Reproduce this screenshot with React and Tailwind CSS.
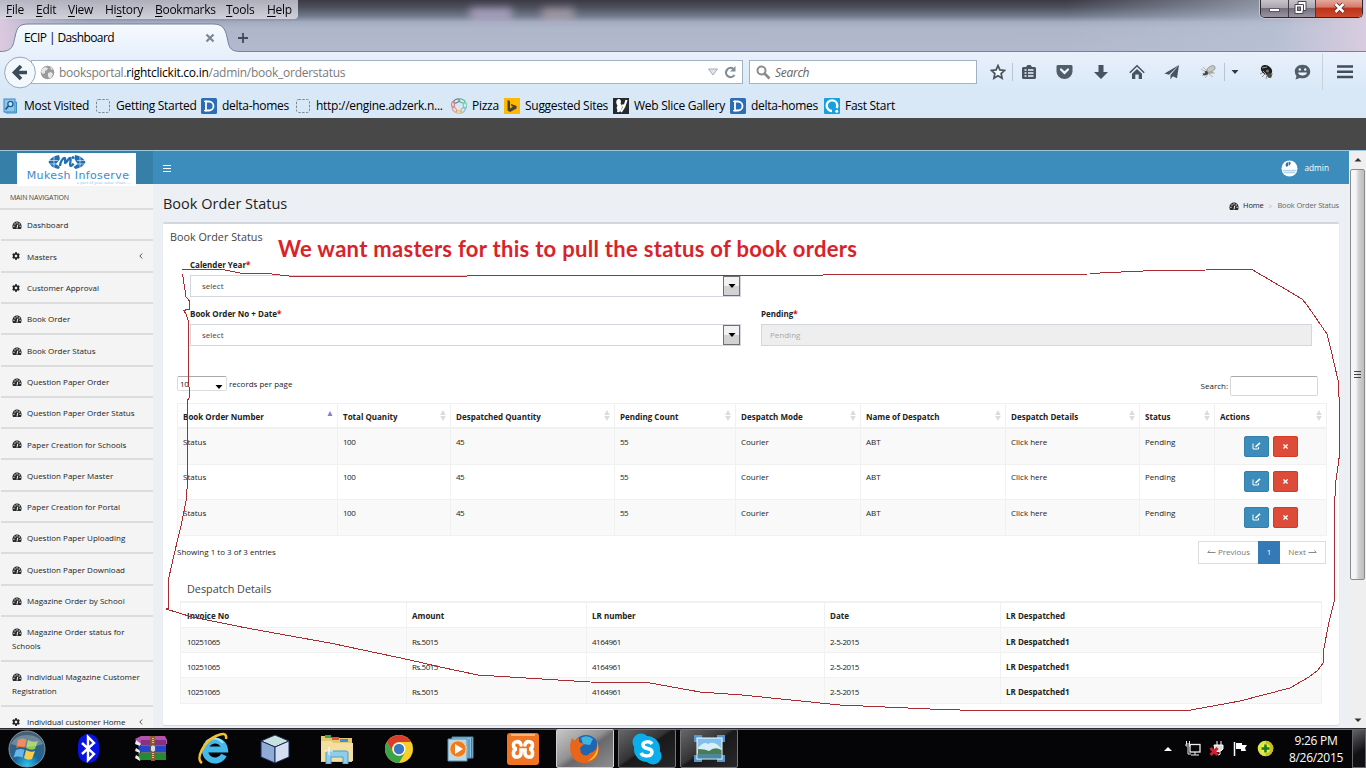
import React from "react";
import { FaCog, FaTimes } from "react-icons/fa";

const MENUS = [
  ["", "F", "ile", "w-[30px]"],
  ["", "E", "dit", "w-[32px]"],
  ["", "V", "iew", "w-[37px]"],
  ["Hi", "s", "tory", "w-[50px]"],
  ["", "B", "ookmarks", "w-[71px]"],
  ["", "T", "ools", "w-[41px]"],
  ["", "H", "elp", "w-[30px]"],
];

function DIcon() {
  return (
    <svg width="16" height="16" viewBox="0 0 16 16">
      <rect width="16" height="16" rx="1.5" fill="#2c6db5" />
      <path d="M5 3.5h3a4.3 4.3 0 0 1 0 9H5z" fill="none" stroke="#fff" strokeWidth="1.8" />
      <path d="M3 3.3h3M3 12.7h3" stroke="#fff" strokeWidth="1.2" />
    </svg>
  );
}
function BlankIcon() {
  return (
    <svg width="15" height="16" viewBox="0 0 15 16">
      <rect x="0.5" y="1.5" width="13" height="13" rx="2" fill="none" stroke="#7d8790" strokeDasharray="2.4 1.4" />
    </svg>
  );
}
function VisitedIcon() {
  return (
    <svg width="16" height="16" viewBox="0 0 16 16">
      <path d="M3 4h10.500v11H3z" fill="#a9d4f0" stroke="#3d8fc4" />
      <rect x="1" y="1" width="11" height="13" fill="#8cc6ea" stroke="#3a8cc2" />
      <circle cx="7.400" cy="6" r="2.600" fill="#c4e4f8" stroke="#1c5a90" strokeWidth="1.300" />
      <path d="M5.400 8L2.500 11.500" stroke="#1c5a90" strokeWidth="1.800" />
    </svg>
  );
}
function PizzaIcon() {
  return (
    <svg width="16" height="16" viewBox="0 0 16 16" fill="none" strokeWidth="1.2">
      <ellipse cx="5.5" cy="3" rx="3.2" ry="1.7" transform="rotate(-25 5.5 3)" stroke="#6e7f8c" />
      <ellipse cx="11" cy="3" rx="3.2" ry="1.7" transform="rotate(25 11 3)" stroke="#57b894" />
      <ellipse cx="14" cy="7.5" rx="1.7" ry="3" stroke="#7ecdb0" />
      <ellipse cx="12" cy="12" rx="3" ry="1.7" transform="rotate(-55 12 12)" stroke="#8cb9d8" />
      <ellipse cx="8" cy="14" rx="3" ry="1.4" stroke="#f0bd5c" />
      <ellipse cx="3.5" cy="11.5" rx="3" ry="1.6" transform="rotate(55 3.5 11.5)" stroke="#e79a88" />
      <ellipse cx="2" cy="6.5" rx="1.4" ry="2.8" stroke="#df8080" />
    </svg>
  );
}
function BingIcon() {
  return (
    <svg width="16" height="16" viewBox="0 0 16 16">
      <rect width="16" height="16" fill="#ffb900" />
      <path d="M3.500 2l2.500 1v7.500l3-1.700-1.500-.8-.9-2.300 6 2.200v2.700L6 14l-2.500-1.500z" fill="#4a4335" />
    </svg>
  );
}
function SliceIcon() {
  return (
    <svg width="16" height="16" viewBox="0 0 16 16">
      <rect width="16" height="16" fill="#26292d" />
      <path d="M5.500 1c2.500 0 3 2.500 2 4.500C9 7 9.500 9 8.500 11c-.5 2.500-2.500 3.500-4.500 3 .5-1.500.5-2.500-.5-4L4.500 7.500C2.500 5 3 1.500 5.500 1z" fill="#fff" />
      <path d="M9.500 6.500l1.300 3M13.500 2c-1 5-2.500 8-5.500 12" stroke="#fff" strokeWidth="2" fill="none" />
    </svg>
  );
}
function FastIcon() {
  return (
    <svg width="16" height="16" viewBox="0 0 16 16">
      <rect width="16" height="16" rx="1" fill="#16a0df" />
      <path d="M8 13a5.300 5.300 0 1 1 5.300-5.300c0 1-.3 1.800-.7 2.500" fill="none" stroke="#fff" strokeWidth="2.400" />
      <circle cx="12.800" cy="13.300" r="1.500" fill="#fff" />
    </svg>
  );
}

const BOOKMARKS = [
  [VisitedIcon, "Most Visited", "w-[93px]"],
  [BlankIcon, "Getting Started", "w-[105px]"],
  [DIcon, "delta-homes", "w-[95px]"],
  [BlankIcon, "http://engine.adzerk.n...", "w-[155px]"],
  [PizzaIcon, "Pizza", "w-[53px]"],
  [BingIcon, "Suggested Sites", "w-[109px]"],
  [SliceIcon, "Web Slice Gallery", "w-[117px]"],
  [DIcon, "delta-homes", "w-[94px]"],
  [FastIcon, "Fast Start", "w-[90px]"],
];

const NAV = [
  ["Dashboard", "dash", "h-[31px]"],
  ["Masters", "cog", "h-[31.8px]", true],
  ["Customer Approval", "cog", "h-[31.3px]"],
  ["Book Order", "dash", "h-[31.3px]"],
  ["Book Order Status", "dash", "h-[31.3px]"],
  ["Question Paper Order", "dash", "h-[31.3px]"],
  ["Question Paper Order Status", "dash", "h-[31.3px]"],
  ["Paper Creation for Schools", "dash", "h-[31.3px]"],
  ["Question Paper Master", "dash", "h-[31.3px]"],
  ["Paper Creation for Portal", "dash", "h-[31.3px]"],
  ["Question Paper Uploading", "dash", "h-[31.3px]"],
  ["Question Paper Download", "dash", "h-[31.3px]"],
  ["Magazine Order by School", "dash", "h-[31.3px]"],
  ["Magazine Order status for Schools", "dash", "h-[44.8px]"],
  ["Individual Magazine Customer Registration", "dash", "h-[44.8px]"],
  ["Individual customer Home", "cog", "h-[31.3px]", true],
];

const COLS = [
  ["Book Order Number", "Status", "w-[160px]"],
  ["Total Quanity", "100", "w-[113px]"],
  ["Despatched Quantity", "45", "w-[164px]"],
  ["Pending Count", "55", "w-[121px]"],
  ["Despatch Mode", "Courier", "w-[125px]"],
  ["Name of Despatch", "ABT", "w-[145px]"],
  ["Despatch Details", "Click here", "w-[134px]"],
  ["Status", "Pending", "w-[75px]"],
];

const LR = [
  ["Invoice No", "10251065", "w-[226px] pl-[6px]"],
  ["Amount", "Rs.5015", "w-[180px] pl-[5px]"],
  ["LR number", "4164961", "w-[238px] pl-[5px]"],
  ["Date", "2-5-2015", "w-[176px] pl-[5px]"],
];

function Gauge({ className }) {
  return (
    <svg width="10" height="8" viewBox="0 0 10 8" className={className}>
      <path d="M1 8C-.5 5 1 .5 5 .5S10.500 5 9 8z" fill="#2b2b2b" />
      <path d="M3 2.300v1.400M5 1.200v1.400M7.200 2.300v1.400M1.300 5.300h1.300M7.500 5.300h1.300M5 7.500L5.700 3.800" stroke="#f4f4f4" strokeWidth="1" />
    </svg>
  );
}

function Browser() {
  return (
    <header className="h-[118px] shrink-0 text-[12px] leading-none tracking-[-0.28px] text-black">
      <div className="relative h-[51px] bg-[linear-gradient(180deg,#3b3a45_0px,#4c4f5b_7px,#71798a_16px,#a2abbf_22px,#aeb6ca_28px,#b3b9ce_51px)]">
        <div className="absolute inset-y-0 left-0 w-[90px] bg-[linear-gradient(90deg,#dcc9df_0px,#c9c3d9aa_30px,transparent)]" />
        <div className="absolute inset-y-0 right-0 w-[300px] bg-[linear-gradient(90deg,transparent,#bac4d6aa_70%,#d9cce0_100%)]" />
        <div className="absolute top-[8px] left-[470px] h-3 w-[42px] bg-[#c3b4d8] opacity-70 blur-[4px]" />
        <div className="absolute top-[8px] left-[542px] h-3 w-8 bg-[#c6b3bf] opacity-60 blur-[4px]" />
        <div className="relative flex h-[19px] w-[298px] items-center rounded-br bg-[linear-gradient(180deg,#b6b6c2,#d5d5e0)] pl-[6px] opacity-95">
          {MENUS.map(([a, u, b, w]) => (
            <span key={u + b} className={"shrink-0 whitespace-nowrap " + w}>
              {a}<u className="underline-offset-2">{u}</u>{b}
            </span>
          ))}
        </div>
        <svg className="absolute top-[23px] left-0" width="1366" height="29" fill="none">
          <defs>
            <linearGradient id="tab" x1="0" y1="0" x2="0" y2="1">
              <stop offset="0" stopColor="#f6fafe" />
              <stop offset="1" stopColor="#e7f0fa" />
            </linearGradient>
          </defs>
          <path d="M0 28.500C13 28.500 13 22 15 14C17 4 19 1 29 1H213C222 1 225 5 227 14C229 23 229 28.500 240 28.500V30H0z" fill="url(#tab)" />
          <path d="M0 28.500C13 28.500 13 22 15 14C17 4 19 1 29 1H213C222 1 225 5 227 14C229 23 229 28.500 240 28.500H1366" stroke="#76809a" />
          <path d="M206.500 11.500l7 7M213.500 11.500l-7 7" stroke="#7c8794" strokeWidth="2.200" />
          <path d="M238 15h10M243 10v10" stroke="#414b59" strokeWidth="1.800" />
        </svg>
        <span className="absolute top-[32px] left-6 tracking-[-0.600px]">ECIP | Dashboard</span>
        <div className="absolute top-0 right-[3px] flex h-[18px] w-[103px] overflow-hidden rounded-b-[5px] border border-t-0 border-[#2c2831] shadow-[0_0_0_1px_#c9c5cf]">
          <div className="flex w-[28px] items-end justify-center border-r border-[#413c48] bg-[linear-gradient(180deg,#c8c4cb_0%,#aaa5ae_45%,#756e7c_50%,#9a93a1_100%)] pb-[5px]">
            <div className="h-1 w-[11px] border border-[#5d5766] bg-white" />
          </div>
          <div className="flex w-[27px] items-center justify-center border-r border-[#413c48] bg-[linear-gradient(180deg,#c8c4cb_0%,#aaa5ae_45%,#756e7c_50%,#9a93a1_100%)] pr-[3px] pb-[2px]">
            <svg width="13" height="13" viewBox="0 0 13 13">
              <path d="M4 .5h8v9h-3v3H1v-9h3z" fill="#fff" stroke="#4b4654" />
              <path d="M9.500 9V3.500H4" fill="none" stroke="#4b4654" />
              <rect x="3.500" y="6" width="3" height="3.500" fill="#8b8592" stroke="#4b4654" />
            </svg>
          </div>
          <div className="flex flex-1 items-center justify-center bg-[linear-gradient(180deg,#e5a89c_0%,#d57c6c_40%,#bd3219_50%,#cc4a2d_100%)] pb-[2px]">
            <svg width="13" height="12" viewBox="0 0 13 12">
              <path d="M2.500 2l8 8M10.500 2l-8 8" stroke="#5b2c2c" strokeWidth="4.200" />
              <path d="M2.500 2l8 8M10.500 2l-8 8" stroke="#fff" strokeWidth="2.500" />
            </svg>
          </div>
        </div>
      </div>

      <div className="h-[67px] bg-[linear-gradient(180deg,#e9f1fb_0px,#d9e8f7_38px,#d8e8f7_67px)] pt-[2px]">
        <div className="flex h-[38px] items-center">
          <svg width="34" height="34" viewBox="0 0 34 34" className="relative z-10 ml-[3px] shrink-0">
            <circle cx="17" cy="17.500" r="15.400" fill="#f3f8fd" stroke="#93a8bd" />
            <path d="M24 17.500H13M18 11l-6.500 6.500 6.500 6.500" fill="none" stroke="#3c4b5a" strokeWidth="3.600" />
          </svg>
          <div className="-ml-[6px] flex h-6 w-[712px] items-center border border-[#9fb2c6] bg-white pl-[8px]">
            <svg width="15" height="15" viewBox="0 0 15 15">
              <circle cx="7.500" cy="7.500" r="6.800" fill="#9b9b9b" />
              <path d="M2 4l3-2 3 1-1 2-2 1v2l-2 1-2-2zM8 8l3-1 2 2-2 4-2 0-1-2zM10 2l3 2-2 1z" fill="#e7e7e7" />
            </svg>
            <span className="ml-1 flex-1 pt-[2px] whitespace-nowrap tracking-[-0.260px] text-[#7b7b7b]">
              booksportal.<span className="text-black">rightclickit.co.in</span>/admin/book_orderstatus
            </span>
            <svg width="32" height="16" viewBox="0 0 32 16" className="mr-[4px]" fill="none">
              <path d="M2.500 5h9L7 11z" fill="#dfe5ea" stroke="#a4adb6" />
              <path d="M27 4.500A4.600 4.600 0 1 0 28.500 11" stroke="#7e8b98" strokeWidth="2.200" />
              <path d="M29.500 2v5.500H24z" fill="#7e8b98" />
            </svg>
          </div>
          <div className="ml-1.5 flex h-6 w-[228px] items-center border border-[#9fb2c6] bg-white pl-1.5 text-[#656565]">
            <svg width="15" height="15" viewBox="0 0 15 15" fill="none" stroke="#8b8b8b">
              <circle cx="5.500" cy="5.500" r="4" strokeWidth="2" />
              <path d="M8.500 8.500l5 5" strokeWidth="2.600" />
            </svg>
            <span className="ml-[4px] pt-[2px] italic">Search</span>
          </div>
          <div className="ml-[7px] flex flex-1 items-center text-[#47535f]">
            <div className="flex w-7 justify-center">
              <svg width="16" height="16" viewBox="0 0 16 16" fill="#f5f9fd" stroke="#47535f" strokeWidth="1.700">
                <path d="M8 1.600l1.900 4.300 4.700.5-3.500 3.100 1 4.700L8 11.800l-4.100 2.400 1-4.700L1.400 6.400l4.700-.5z" />
              </svg>
            </div>
            <div className="flex h-[18px] w-[33px] items-center justify-center border-l border-[#b7c4d1]">
              <svg width="16" height="16" viewBox="0 0 16 16">
                <path d="M2 3h3l1.500-2h3L11 3h3l1 1v10l-1 1H2l-1-1V4z" fill="#47535f" />
                <path d="M3.500 6h2M7 6h5.500M3.500 9h2M7 9h5.500M3.500 12h2M7 12h5.500" stroke="#eef5fc" strokeWidth="1.600" />
              </svg>
            </div>
            <div className="ml-px flex w-9 justify-center">
              <svg width="17" height="16" viewBox="0 0 17 16">
                <path d="M1.500 1h14l1 1v5.500a8 7.500 0 0 1-16 0V2z" fill="#515d69" />
                <path d="M5 5.500l3.500 3.400L12 5.500" fill="none" stroke="#eef5fc" strokeWidth="2.200" strokeLinecap="round" />
              </svg>
            </div>
            <div className="flex w-9 justify-center pl-px">
              <svg width="16" height="16" viewBox="0 0 16 16"><path d="M5.500 1h5v7H15l-7 7-7-7h4.500z" fill="#47535f" /></svg>
            </div>
            <div className="flex w-9 justify-center pl-px">
              <svg width="16" height="16" viewBox="0 0 16 16" fill="none">
                <path d="M.8 8.700L8 1.700l7.200 7" stroke="#47535f" strokeWidth="1.500" />
                <path d="M3 9.700l5-4.800 5 4.800V15H9.700v-4.500H6.300V15H3z" fill="#47535f" />
              </svg>
            </div>
            <div className="flex w-[35px] justify-center">
              <svg width="16" height="16" viewBox="0 0 16 16" fill="#47535f">
                <path d="M15 1L.5 9.500l4.500 1.200zM15 1L6.500 11v4.500l2.300-3.300 4.200 2z" />
              </svg>
            </div>
            <div className="flex w-[35px] justify-center pl-[3px]">
              <svg width="17" height="16" viewBox="0 0 17 16">
                <path d="M1 5l5 3M2 12l4-3M5 14l3-4M13 13l-4-3M15 9l-4 0M3 3l4 4" stroke="#a5a5a0" strokeWidth=".8" />
                <ellipse cx="6" cy="9" rx="3.400" ry="2" fill="#46484a" transform="rotate(-25 6 9)" />
                <ellipse cx="11" cy="5" rx="4.500" ry="2.600" fill="#c5c8c6" stroke="#888" strokeWidth=".7" transform="rotate(-30 11 5)" />
                <circle cx="4" cy="8.500" r="1" fill="#eee" />
                <path d="M8 9l5-1" stroke="#a7a49b" strokeWidth="2" />
              </svg>
            </div>
            <div className="flex h-[18px] w-5 items-center justify-center border-l border-[#b7c4d1]">
              <svg width="8" height="4"><path d="M.5 0h7L4 4z" fill="#303840" /></svg>
            </div>
            <div className="ml-px flex w-10 justify-center pl-[3px]">
              <svg width="17" height="16" viewBox="0 0 17 16">
                <path d="M2 10l4-2M4 13l3-3M8 15l1-4M13 14l-3-4M15 10l-3 0" stroke="#777" strokeWidth=".8" />
                <ellipse cx="8.500" cy="6" rx="6" ry="4.500" fill="#1e1f22" transform="rotate(32 8.500 6)" />
                <path d="M4 4l5-1M5 7l3 3" stroke="#9f9f9f" />
                <circle cx="11.500" cy="11.500" r="2.400" fill="#4c4640" />
                <circle cx="9.500" cy="7" r="1.500" fill="#777" />
              </svg>
            </div>
            <div className="flex w-[34px] justify-center">
              <svg width="17" height="16" viewBox="0 0 17 16">
                <path d="M8.500.8c4.500 0 7.700 2.900 7.700 6.700s-3.200 6.800-7.700 6.800c-1 0-2-.2-2.800-.4L1.500 15.500l1-3.600A6.300 6.300 0 0 1 .8 7.500C.8 3.700 4 .8 8.500.8z" fill="#515d69" />
                <circle cx="5.800" cy="5.500" r="1.200" fill="#eef5fc" />
                <circle cx="11.200" cy="5.500" r="1.200" fill="#eef5fc" />
                <path d="M4 8.500h9c-.5 4-8.500 4-9 0z" fill="#eef5fc" />
              </svg>
            </div>
            <div className="ml-[3px] flex h-9 flex-1 items-center justify-center border-l border-[#c5d1dd]">
              <svg width="16" height="14" viewBox="0 0 16 14"><path d="M0 1.500h16M0 6.700h16M0 12h16" stroke="#414d59" strokeWidth="2.600" /></svg>
            </div>
          </div>
        </div>
        <div className="flex h-[26px] items-center pt-[3px] pl-[3px]">
          {BOOKMARKS.map(([Icon, label, w], i) => (
            <div key={i} className={"flex shrink-0 items-center gap-[5px] whitespace-nowrap " + w}>
              <Icon />
              <span>{label}</span>
            </div>
          ))}
        </div>
      </div>
    </header>
  );
}

function Sidebar() {
  return (
    <aside className="w-[153px] shrink-0 overflow-hidden bg-[#f4f4f4] text-[#222]">
      <div className="flex h-[25.900px] items-center border-b-2 border-[#dcdcdc] pt-[3px] pl-[10px] text-[7px] tracking-[-0.180px] text-[#444]">MAIN NAVIGATION</div>
      {NAV.map(([label, icon, h, arrow]) => (
        <div key={label} className={"ml-px flex items-center border-b-2 border-[#dcdcdc] pt-[1px] pr-[9px] pl-[11px] " + h}>
          <div className="flex-1 leading-[13.500px]">
            {icon === "cog" ? <FaCog className="mr-[7px] inline size-[8px] -translate-y-px" /> : <Gauge className="mr-[5px] inline -translate-y-px" />}
            {label}
          </div>
          {arrow && <svg width="4" height="6" className="mr-[1px]"><path d="M3.200.5L.8 3l2.400 2.500" fill="none" stroke="#555" /></svg>}
        </div>
      ))}
    </aside>
  );
}

function Select({ children }) {
  return (
    <div className="flex h-[22px] w-[551px] items-stretch border border-[#d2d6de] pl-[11px]">
      <span className="flex-1 self-center text-[#444]">{children}</span>
      <div className="flex w-[17px] items-center justify-center border border-[#6f6f6f] bg-[linear-gradient(180deg,#f2f2f2_50%,#d2d2d2_50%)]">
        <svg width="8" height="4"><path d="M.5 0h7L4 4z" /></svg>
      </div>
    </div>
  );
}

function Sort({ first }) {
  return first ? (
    <svg width="6" height="14" className="mr-[4px]"><path d="M3 1l2.500 5h-5z" fill="#7d80dc" /></svg>
  ) : (
    <svg width="6" height="12" className="mr-[4px] -translate-y-px"><path d="M3 0l2.800 5H.2zM3 11L.2 6h5.600z" fill="#dcdcdc" /></svg>
  );
}

function Orders() {
  return (
    <div className="mt-[7px] ml-[14px] w-[1150px] border-t border-l border-[#f1f1f1]">
      <div className="flex h-[25px] border-b-2 border-[#f1f1f1] font-bold">
        {COLS.map(([h, , w], i) => (
          <div key={h} className={"flex shrink-0 items-center justify-between border-r border-[#f1f1f1] pt-[3px] pl-[5px] " + w}>
            {h}<Sort first={i === 0} />
          </div>
        ))}
        <div className="flex flex-1 items-center justify-between border-r border-[#f1f1f1] pt-[3px] pl-[5px]">Actions<Sort /></div>
      </div>
      {["bg-[#f9f9f9]", "bg-white", "bg-[#f9f9f9]"].map((bg, r) => (
        <div key={r} className={"flex h-[35.500px] border-b border-[#f1f1f1] " + bg}>
          {COLS.map(([h, v, w], i) => (
            <div key={h} className={"shrink-0 border-r border-[#f1f1f1] pt-[8.800px] pl-[5px] " + w + (i > 0 && i < 4 ? " tracking-[-0.500px]" : "")}>{v}</div>
          ))}
          <div className="flex flex-1 gap-1 border-r border-[#f1f1f1] pt-[6.700px] pl-[29px] text-white">
            <div className="flex h-[21px] w-[25px] items-center justify-center rounded-[2px] border border-[#367fa9] bg-[#3c8dbc]">
              <svg width="9" height="8" viewBox="0 0 9 8" fill="none" stroke="#fff"><path d="M1 1.500v5.500h5.500V5" /><path d="M3.500 5L8 .8" strokeWidth="1.600" /></svg>
            </div>
            <div className="flex h-[21px] w-[25px] items-center justify-center rounded-[2px] border border-[#d73925] bg-[#dd4b39]"><FaTimes className="size-[7px]" /></div>
          </div>
        </div>
      ))}
    </div>
  );
}

function Despatch() {
  return (
    <div className="mt-[6px] ml-[17px] w-[1142px] border-t-2 border-l border-[#f1f1f1]">
      {[0, 1, 2, 3].map((r) => (
        <div key={r} className={"flex items-center border-b border-[#f1f1f1] " + (r === 0 ? "h-[25.500px] font-bold" : "h-[25.200px]") + (r % 2 ? " bg-[#f9f9f9]" : "")}>
          {LR.map(([h, v, w]) => (
            <div key={h} className={"flex h-full shrink-0 items-center border-r border-[#f1f1f1] pt-[3px] " + w + (r ? " tracking-[-0.450px]" : "")}>{r ? v : h}</div>
          ))}
          <div className="flex h-full flex-1 items-center border-r border-[#f1f1f1] pt-[3px] pl-[5px] font-bold">{r ? "LR Despatched1" : "LR Despatched"}</div>
        </div>
      ))}
    </div>
  );
}

function Page() {
  return (
    <div className="relative flex h-[578px] shrink-0 border-t border-[#9fc6de] text-[8px] leading-none text-[#222]">
      <div className="flex w-[1349px] flex-col">
        <div className="flex h-[33px] shrink-0 bg-[#3c8dbc] text-white">
          <div className="w-[153px] bg-[#367fa9] pl-[17px]">
            <div className="relative z-10 mt-[2px] flex h-[33px] w-[119px] flex-col items-center bg-white text-[#3d8acb]">
              <svg width="38" height="16" viewBox="0 0 38 16" className="mt-[1px] -ml-[20px] shrink-0">
                <path d="M11 1C5 2 2 5 .5 8c2 4 5 6 10 7l1.500-2-4-3 4-5z" fill="#1f6fb5" />
                <path d="M27 1c6 1 9 4 10.500 7-2 4-5 6-10 7l-2-2 4-3-3-5z" fill="#1f6fb5" />
                <path d="M1 6.500h9M1 10h9M29 6.500h9M29 10h9M6 1v14M32 1v14" stroke="#fff" strokeWidth=".6" />
                <path d="M12 12c0-4 3-8 4.500-8s0 5 .8 5c1.500 0 3-5 4.700-5s-1 8 .8 8c1.200 0 2-1 2.700-2.500" fill="none" stroke="#1f6fb5" strokeWidth="2.300" />
                <circle cx="25" cy="3.500" r="1.500" fill="#1f6fb5" />
              </svg>
              <span className="ml-[3px] pt-px font-['DejaVu_Sans'] text-[11px] leading-[9px] tracking-[0.380px] whitespace-nowrap">Mukesh Infoserve</span>
              <span className="self-end pr-[5px] text-[4px] leading-[5px] tracking-[0.050px] whitespace-nowrap text-[#8fbce0]">a part of your value chain.....</span>
            </div>
          </div>
          <div className="flex flex-1 items-center justify-between pt-[1px] pr-5 pl-[10px]">
            <svg width="8" height="7"><path d="M0 .5h8M0 3.500h8M0 6.500h8" stroke="#fff" /></svg>
            <div className="flex items-center gap-[6px]">
              <svg width="17" height="17" viewBox="0 0 17 17">
                <circle cx="8.500" cy="8.500" r="8" fill="#fff" />
                <path d="M5 3l2.500-1v3L6 7 4.500 5.500zM8 1.500l2 1.500-2 3z" fill="#3470ad" />
                <path d="M1.500 10.500h14M3 12.500h11" stroke="#b5d6ee" strokeWidth="1.500" />
              </svg>
              <span className="text-[8.300px]">admin</span>
            </div>
          </div>
        </div>
        <div className="flex min-h-0 flex-1">
          <Sidebar />
          <main className="w-[1196px] bg-[#ecf0f5] px-[10px]">
            <div className="flex h-[38px] items-center justify-between">
              <h1 className="pt-[2px] text-[14.500px]">Book Order Status</h1>
              <div className="flex items-center pt-[6px] text-[7.500px] tracking-[-0.160px] text-[#666]">
                <Gauge className="mr-[4px]" />
                <span className="text-[#222]">Home</span>
                <span className="mx-[5px] text-[7px] text-[#bbb]">&gt;</span>
                <span>Book Order Status</span>
              </div>
            </div>
            <section className="h-[503px] overflow-hidden rounded-[2px] border-t-2 border-[#d2d6de] bg-white shadow-[0_1px_1px_rgba(0,0,0,0.12)]">
              <h2 className="mt-[7px] ml-[7px] h-[11px] text-[10.800px] leading-[11px] text-[#444]">Book Order Status</h2>
              <div className="mt-[19px] ml-[27px] h-[9px] font-bold">Calender Year<span className="text-red-600">*</span></div>
              <div className="mt-[5px] ml-[27px]"><Select>select</Select></div>
              <div className="mt-[13px] ml-[27px] flex gap-5">
                <div>
                  <div className="h-[14px] font-bold">Book Order No + Date<span className="text-red-600">*</span></div>
                  <Select>select</Select>
                </div>
                <div>
                  <div className="h-[14px] font-bold">Pending<span className="text-red-600">*</span></div>
                  <div className="flex h-[22px] w-[551px] items-center border border-[#d2d6de] bg-[#eee] pl-[8px] text-[#a9a9a9]">Pending</div>
                </div>
              </div>
              <div className="mt-[30px] flex justify-between pr-[21px] pl-[14px]">
                <div className="flex items-start">
                  <div className="flex h-[15px] w-[50px] items-center rounded-[2px] border border-[#ddd] border-t-[#aaa] pr-[3px] pl-[2px]">
                    <span className="flex-1 tracking-[-0.400px]">10</span>
                    <svg width="8" height="4" className="mt-[6px]"><path d="M.5 0h7L4 4z" /></svg>
                  </div>
                  <span className="mt-[4px] ml-[2px]">records per page</span>
                </div>
                <div className="flex items-center">
                  <span className="mr-[2px]">Search:</span>
                  <div className="h-5 w-[88px] rounded-[2px] border border-[#d5d9de] border-t-[#aaa]" />
                </div>
              </div>
              <Orders />
              <div className="mt-[5px] flex justify-between pr-[13px] pl-[14px]">
                <span className="mt-[7px]">Showing 1 to 3 of 3 entries</span>
                <div className="flex h-[23px] w-[128px] border border-[#ddd] text-[#777]">
                  <div className="flex flex-1 items-center justify-center gap-[2px]">
                    <svg width="9" height="5"><path d="M2.500.5L.8 2.500H8.500" fill="none" stroke="#888" /></svg>Previous
                  </div>
                  <div className="-my-px flex w-[22px] items-center justify-center bg-[#337ab7] text-white">1</div>
                  <div className="flex w-[45px] items-center justify-center gap-[2px]">
                    Next<svg width="9" height="5"><path d="M6.500.5l1.700 2H.5" fill="none" stroke="#888" /></svg>
                  </div>
                </div>
              </div>
              <h2 className="mt-[19px] ml-6 h-[12px] text-[10.800px] leading-[11px] text-[#444]">Despatch Details</h2>
              <Despatch />
            </section>
          </main>
        </div>
      </div>
      <div className="flex w-[17px] flex-col items-center bg-[#efefef]">
        <svg width="17" height="18"><path d="M5.500 10.500h7L9 7z" fill="#333" /></svg>
        <div className="flex h-[411px] w-[15px] items-center justify-center rounded-[2px] border border-[#8b8b8b] bg-[linear-gradient(90deg,#f5f5f5_35%,#cfcfd1_60%,#bdbdc0)]">
          <svg width="8" height="9"><path d="M0 1.500h7M0 4.500h7M0 7.500h7" stroke="#444" /></svg>
        </div>
        <svg width="17" height="18" className="mt-auto"><path d="M5.500 8.500h7L9 12z" fill="#333" /></svg>
      </div>
    </div>
  );
}

function Annotation() {
  return (
    <>
      <svg className="pointer-events-none absolute inset-0" width="1366" height="768" fill="none" stroke="#ac2b31" shapeRendering="crispEdges">
        <polyline points="182,269.500 223,269.500 240,273 272,274 293,276.500 1000,274.500 1090,274 1100,273 1143,271 1238,269.500 1252,269.500 1302,299 1307,305 1327,334 1331,350 1338,380 1339.500,405 1339.500,455 1336,480 1334.500,505 1334.500,600 1329,622 1324,648 1323,663 1318,670 1309,677 1290,688 1240,701 1191,710 960,710 930,709 840,705 742,695 700,692 650,683 590,682 478,675 440,667 410,660 330,643 285,635 245,627.700 192,617 166,609 168.500,608 169,577 173.500,557 181.700,523 186.700,497 187.700,472 187.700,400 189.500,397 189.500,392 188.500,382 188.500,322 186,314 183.500,310.500 189.500,309 189.500,301 186,297 184,283.500 182.500,274" />
      </svg>
      <div className="absolute top-[237px] left-[278px] font-['Lato'] text-[22px] leading-6 font-bold tracking-[0.300px] whitespace-nowrap text-[#d8232a]">
        We want masters for this to pull the status of book orders
      </div>
    </>
  );
}

function Task({ children, mode = "" }) {
  return <div className={"flex h-full w-[62px] items-center justify-center " + mode}>{children}</div>;
}

function Taskbar() {
  const active = "ml-[2px] !w-[58px] border border-[#77777b] mr-[2px] rounded-[2px] ";
  return (
    <footer className="flex h-10 shrink-0 items-stretch border-t border-[#2b2b33] bg-[#050407] shadow-[inset_0_1px_0_#68666c]">
      <div className="flex w-[58px] items-center pl-[8px]">
        <svg width="38" height="38" viewBox="0 0 38 38">
          <defs>
            <radialGradient id="orb" cx=".5" cy=".95" r=".9">
              <stop offset="0" stopColor="#28c6f3" />
              <stop offset=".4" stopColor="#1a659c" />
              <stop offset="1" stopColor="#48606f" />
            </radialGradient>
          </defs>
          <circle cx="19" cy="19" r="18" fill="url(#orb)" stroke="#8196a3" />
          <path d="M10 10q5-3 8.500 0l-2 8q-4-2-8.500 0z" fill="#e8672c" />
          <path d="M20 10q5 3 10 1l-3 8q-4 2-9-1z" fill="#94c74b" />
          <path d="M8 20q5-2 8.500 0l-2 7.500q-5-2-9 0z" fill="#6bb6e8" />
          <path d="M18 20q5 3 9 1l-3 8q-4 2-8-1z" fill="#f8cb48" />
          <path d="M3 14C8 2 30 2 35 14Q19 20 3 14z" fill="#fff" opacity=".25" />
        </svg>
      </div>
      <Task>
        <svg width="24" height="32" viewBox="0 0 24 32"><rect x="1" y="1" width="21" height="29" rx="10.500" fill="#0712e5" /><path d="M5 10l12 11-6 6V4l6 6L5 21" fill="none" stroke="#fff" strokeWidth="2.400" /></svg>
      </Task>
      <Task>
        <svg width="34" height="26" viewBox="0 0 34 26">
          <path d="M1 3l6-3h24l2 4v4H5z" fill="#b552ab" /><path d="M2 4l5 4-1 2-5-2zM2 12l5 3-1 2-5-2zM2 19l5 3-1 3-5-3z" fill="#eee" />
          <path d="M7 4h25v5H7z" fill="#86327e" /><path d="M4 10h28v6H6z" fill="#2645cf" /><path d="M4 17h28v7H6z" fill="#228d2e" />
          <path d="M7 9.500h25M7 16.500h25" stroke="#6b6b74" />
          <path d="M16 0h5v25h-4z" fill="#8d5a34" /><path d="M19 2v6M19 15v8" stroke="#e4be87" strokeDasharray="1 1" strokeWidth="2" /><rect x="16.500" y="9" width="5" height="7" rx="2" fill="#ddd" stroke="#555" />
        </svg>
      </Task>
      <Task>
        <svg width="34" height="34" viewBox="0 0 34 34" fill="none">
          <path d="M28 23a10 10 0 1 1 1-5.500H12" stroke="#45b8ec" strokeWidth="6" />
          <path d="M27 11A11 11 0 0 0 10 10" stroke="#a7e2fa" strokeWidth="2" />
          <path d="M6 31C-1 27 8 9 20 4c7-3 11-3 10 3" stroke="#f2c32d" strokeWidth="2.500" />
        </svg>
      </Task>
      <Task>
        <svg width="32" height="32" viewBox="0 0 32 32" stroke="#1f2a57">
          <path d="M2 8L16 2l14 6-14 6z" fill="#c9e2df" /><path d="M2 8l14 6v16L2 24z" fill="#91abd7" /><path d="M30 8l-14 6v16l14-6z" fill="#d3def1" />
        </svg>
      </Task>
      <Task>
        <svg width="34" height="30" viewBox="0 0 34 30">
          <path d="M1 2h9l2 2h20v24H1z" fill="#e6c772" /><path d="M5 1h6v3H5z" fill="#36a64f" /><path d="M12 3h7v3h-7z" fill="#e0523c" /><path d="M20 5h8v3h-8z" fill="#3c90d8" />
          <path d="M1 7h10l2 2h20v18H1z" fill="#f5dfa0" />
          <path d="M6 30V19q0-2 2-2h18q2 0 2 2v11h-5v-7H11v7z" fill="#8fcdea" stroke="#4a9fcd" />
          <path d="M9 13v8M5 17h8" stroke="#fff" />
        </svg>
      </Task>
      <Task>
        <svg width="30" height="30" viewBox="0 0 30 30">
          <circle cx="15" cy="15" r="14" fill="#f7cf29" />
          <path d="M2.900 8A14 14 0 0 1 27.100 8H15a7 7 0 0 0-6 10.500z" fill="#d93b2f" />
          <path d="M2.900 8A14 14 0 0 0 15 29l6-10.500a7 7 0 0 1-12 0z" fill="#3ba349" />
          <circle cx="15" cy="15" r="6.500" fill="#fff" /><circle cx="15" cy="15" r="5.200" fill="#3a78c6" />
        </svg>
      </Task>
      <Task>
        <svg width="28" height="26" viewBox="0 0 28 26">
          <path d="M5 1h21v21H5z" fill="#8fc2de" stroke="#4d89ae" /><path d="M22 3v20M24.500 2v20" stroke="#3b7fae" />
          <path d="M1 3h19v22H1z" fill="#b9d8e8" stroke="#5a91b1" />
          <circle cx="11" cy="13" r="8.200" fill="#ef7d20" stroke="#fbd1a1" /><path d="M8 8l8 5-8 5z" fill="#fff" />
        </svg>
      </Task>
      <Task>
        <svg width="32" height="32" viewBox="0 0 32 32">
          <rect width="32" height="32" rx="3" fill="#ee7524" /><path d="M4 2h24" stroke="#ffb477" strokeWidth="2" />
          <path d="M14 12c-1-5-8-4-7.500.5 0 2 1.500 3.500 3.500 3.500-3 0-4 3-3.500 5.500 1 4 7.500 3 7.500-1.500v-3h4v3c0 4.500 6.500 5.500 7.500 1.500.5-2.500-.5-5.500-3.500-5.500 2 0 3.500-1.500 3.500-3.500.5-4.500-6.500-5.500-7.500-.5" fill="none" stroke="#fff" strokeWidth="3.600" strokeLinecap="round" />
        </svg>
      </Task>
      <Task mode={active + "!border-[#d0d0d2] bg-[linear-gradient(145deg,#c7c7c8_0%,#929294_45%,#69696c_55%,#8e8e91_100%)]"}>
        <svg width="32" height="32" viewBox="0 0 32 32">
          <circle cx="17" cy="15" r="13" fill="#1f66b1" /><path d="M12 5q6-4 12 1l-3 6-7-1z" fill="#41b4dd" />
          <path d="M27 6c8 15-2 25-13 24C1 29-1 15 3 5l3 3 4-4v5l5 2-4 4 1 5q5 5 9 0 10-3 6-14z" fill="#e96518" />
          <path d="M28 8c4 12-3 19-9 20q12-8 9-20z" fill="#ffd62f" />
        </svg>
      </Task>
      <Task mode={active + "bg-[linear-gradient(145deg,#67676a_0%,#343437_45%,#19191c_50%,#28282b_100%)]"}>
        <svg width="30" height="32" viewBox="0 0 30 32">
          <circle cx="9" cy="9" r="8.500" fill="#0baeea" /><circle cx="21" cy="23" r="8.500" fill="#0baeea" /><circle cx="15" cy="16" r="13" fill="#0baeea" />
          <path d="M20 11c-2-3-9-3-9 1 0 5 9 2 9 7 0 5-9 5-11 1" fill="none" stroke="#fff" strokeWidth="3.500" />
        </svg>
      </Task>
      <Task mode={active + "bg-[linear-gradient(145deg,#67676a_0%,#343437_45%,#19191c_50%,#28282b_100%)]"}>
        <svg width="31" height="27" viewBox="0 0 31 27">
          <path d="M1.500 7V1.500H8M23 1.500h6.500V7M1.500 20v5.500H8M23 25.500h6.500V20" fill="none" stroke="#5795cf" strokeWidth="3" />
          <rect x="3" y="3" width="25" height="21" fill="#7fc0ec" stroke="#fff" /><path d="M4 13q6-7 10-4 7-4 13.500 5v4H4z" fill="#d9eff8" /><path d="M4 14q7 0 11 2 6-5 12.500-1v4H4z" fill="#487d54" /><path d="M3.500 19h24v4.500h-24z" fill="#4d879b" />
        </svg>
      </Task>
      <div className="ml-auto flex items-center text-[12px] leading-none tracking-[-0.300px] text-white">
        <svg width="8" height="4" className="mr-[13px]"><path d="M0 4h8L4 0z" fill="#fff" /></svg>
        <svg width="17" height="16" viewBox="0 0 17 16" className="mr-[7px]" fill="none" stroke="#eee">
          <rect x="5" y="3.500" width="10" height="7.500" strokeWidth="1.300" /><path d="M6 14h8M10 11v3M3 6v7h3" /><path d="M1.500 0v3M4.500 0v3M1 3h4v2H1z" />
        </svg>
        <svg width="15" height="17" viewBox="0 0 15 17" className="mr-[9px]">
          <path d="M8 1v4M12 1v4M5 5h9v4q-4 5-8 1z" stroke="#fff" fill="#ddd" /><path d="M11 12q1 3-2 3" stroke="#fff" fill="none" /><path d="M1.500 8l7 7M8.500 8l-7 7" stroke="#d81e28" strokeWidth="3" />
        </svg>
        <svg width="15" height="16" viewBox="0 0 15 16" className="mr-[9px]"><path d="M1.500 1v14" stroke="#fff" strokeWidth="1.500" /><path d="M3 2h6v2h5l-2 3 1 3H8V8H3z" fill="#fff" /></svg>
        <svg width="17" height="17" viewBox="0 0 17 17" className="mr-[14px]"><circle cx="8.500" cy="8.500" r="7.800" fill="#dde743" /><path d="M8.500.7a7.800 7.800 0 0 1 0 15.600z" fill="#c9bf1b" /><circle cx="8.500" cy="8.500" r="4.800" fill="#f5ea45" /><path d="M4.500 8.500h8M8.500 4.500v8" stroke="#147d25" strokeWidth="2.600" /></svg>
        <div className="mr-[8px] w-[56px] text-center leading-[17px] whitespace-nowrap">9:26 PM<br />8/26/2015</div>
        <div className="h-full w-[14px] border border-[#66656b] bg-[linear-gradient(150deg,#626266,#111114_60%)]" />
      </div>
    </footer>
  );
}

export default function App() {
  return (
    <div className="relative flex h-[768px] w-[1366px] flex-col overflow-hidden bg-[#484848] font-['Open_Sans','Noto_Sans',sans-serif]">
      <Browser />
      <div className="h-8 shrink-0 bg-[#484848]" />
      <Page />
      <Taskbar />
      <Annotation />
    </div>
  );
}
